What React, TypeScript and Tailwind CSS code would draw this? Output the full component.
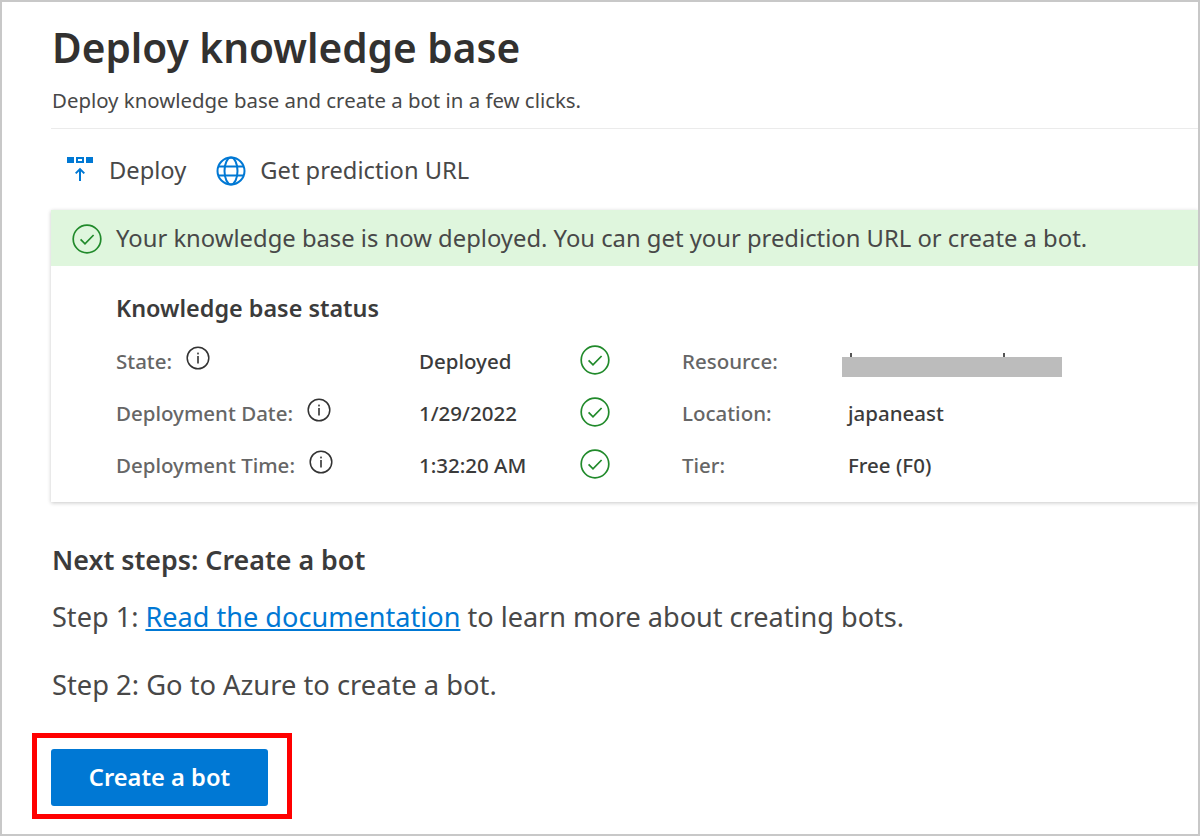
const font = { fontFamily: '"Noto Sans", "Open Sans", sans-serif' };

function Check({ className = "" }: { className?: string }) {
  return (
    <svg viewBox="0 0 30 30" className={"w-[30px] h-[30px] " + className} fill="none">
      <circle cx="15" cy="15" r="13.8" stroke="#218a2b" strokeWidth="1.7" />
      <path d="M8.6 15.4l4.4 4.4 8.6-8.8" stroke="#218a2b" strokeWidth="1.7" />
    </svg>
  );
}

function Info() {
  return (
    <svg viewBox="0 0 24 24" className="w-[24px] h-[24px]" fill="none">
      <circle cx="12" cy="12" r="10.8" stroke="#333" strokeWidth="1.5" />
      <rect x="11.2" y="10" width="1.6" height="7.5" fill="#333" />
      <rect x="11.2" y="6.6" width="1.6" height="1.8" fill="#333" />
    </svg>
  );
}

const rows = [
  { label: "State:", value: "Deployed", k: "Resource:", v: "" },
  { label: "Deployment Date:", value: "1/29/2022", k: "Location:", v: "japaneast" },
  { label: "Deployment Time:", value: "1:32:20 AM", k: "Tier:", v: "Free (F0)" },
];

export default function App() {
  return (
    <div style={font} className="w-[1200px] h-[836px] bg-white border-2 border-[#c8c8c8] overflow-hidden text-[#333] pl-[49px]">
      <div className="pt-[20px] h-[127px] border-b border-[#ebebeb] pl-[1px]">
        <h1 className="text-[40.6px] leading-[52px] font-semibold text-[#323130]">Deploy knowledge base</h1>
        <p className="mt-[13px] text-[20.4px] leading-[26px] text-[#484848]">Deploy knowledge base and create a bot in a few clicks.</p>
      </div>

      <div className="h-[81px] flex items-center text-[#484848] text-[23.7px] pt-[2px]">
        <svg viewBox="0 0 28 28" className="w-[28px] h-[28px] ml-[16px]" fill="#0078d4">
          <rect x="0" y="0" width="7" height="6" />
          <rect x="10" y="1" width="6" height="4" fill="none" stroke="#0078d4" strokeWidth="2" />
          <rect x="19" y="0" width="7" height="6" />
          <path d="M12 24V14.500l-2.600 2.600-1.400-1.400L13 10.700l5 5-1.400 1.400-2.600-2.600V24z" />
        </svg>
        <span className="ml-[14px]">Deploy</span>
        <svg viewBox="0 0 30 30" className="w-[30px] h-[30px] ml-[30px]" fill="none" stroke="#0078d4" strokeWidth="2">
          <circle cx="15" cy="15" r="13.5" />
          <ellipse cx="15" cy="15" rx="6.500" ry="13.5" />
          <path d="M2.500 10.500h25M2.500 19.500h25" />
        </svg>
        <span className="ml-[14px]">Get prediction URL</span>
      </div>

      <div className="shadow-[0_1px_4px_rgba(0,0,0,0.22)] h-[292px]">
        <div className="h-[56px] bg-[#dff6dd] flex items-center pl-[21px] text-[23.8px] text-[#484848] pt-[1px]">
          <Check />
          <span className="ml-[14px] mt-[1px]">Your knowledge base is now deployed. You can get your prediction URL or create a bot.</span>
        </div>
        <div className="pl-[65px] pt-[27px]">
          <h2 className="text-[23.4px] leading-[30px] font-semibold text-[#3b3b3b]">Knowledge base status</h2>
          <div className="mt-[23px] flex flex-col gap-[22px]">
            {rows.map((r) => (
              <div key={r.label} className="flex items-center h-[30px] text-[20.5px]">
                <div className="w-[303px] flex items-center text-[#666] font-medium">
                  <span>{r.label}</span>
                  <span className="ml-[14px] -mt-[6px] flex"><Info /></span>
                </div>
                <div className="w-[161px] font-medium text-[#3b3b3b]">{r.value}</div>
                <Check className="-mt-[3px]" />
                <div className="ml-[72px] w-[166px] text-[#666] font-medium">{r.k}</div>
                {r.v ? (
                  <div className="font-medium text-[#3b3b3b]">{r.v}</div>
                ) : (
                  <div className="relative -ml-[6px] mt-[11px] w-[220px] h-[20px] bg-[#bcbcbc]">
                    <span className="absolute left-[8px] -top-[4px] w-[2px] h-[4px] bg-[#555]" />
                    <span className="absolute left-[161px] -top-[4px] w-[2px] h-[4px] bg-[#555]" />
                  </div>
                )}
              </div>
            ))}
          </div>
        </div>
      </div>

      <h2 className="mt-[40px] ml-[1px] text-[26.8px] leading-[36px] font-semibold text-[#3b3b3b]">Next steps: Create a bot</h2>
      <p className="mt-[21px] ml-[1px] text-[27.1px] leading-[36px] text-[#484848]">
        Step 1: <a className="text-[#0078d4] underline">Read the documentation</a> to learn more about creating bots.
      </p>
      <p className="mt-[32px] ml-[1px] text-[27.3px] leading-[36px] text-[#484848]">Step 2: Go to Azure to create a bot.</p>

      <div className="mt-[30px] -ml-[19px] w-[260px] h-[86px] border-[5px] border-[#ff0000] flex items-center pl-[14px]">
        <button className="w-[217px] h-[57px] mt-[3px] bg-[#0078d4] rounded-[3px] text-white text-[23.7px] font-semibold">Create a bot</button>
      </div>
    </div>
  );
}
